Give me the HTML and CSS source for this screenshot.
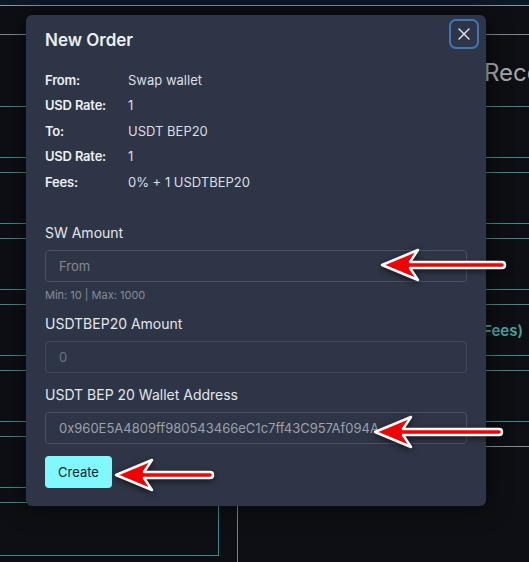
FILE: index.html
```html
<!DOCTYPE html>
<html>
<head>
<meta charset="utf-8">
<link rel="stylesheet" href="styles.css">
</head>
<body>
<div class="page">
  <div class="topbar"></div>
  <div class="header-space"></div>
  <div class="columns">
    <div class="left-col">
      <div class="card"></div>
      <div class="card"></div>
      <div class="card"></div>
      <div class="card"></div>
      <div class="card"></div>
      <div class="card"></div>
      <div class="card card-last"></div>
    </div>
    <div class="right-col">
      <div class="right-head">Recent Orders</div>
      <div class="rcard rcard-first"></div>
      <div class="rcard"></div>
      <div class="rcard"></div>
      <div class="rcard rcard-fees"><span class="fees">(incl. Fees)</span></div>
      <div class="rcard"></div>
      <div class="rfoot"></div>
    </div>
  </div>
</div>

<div class="modal">
  <button class="close-btn" aria-label="Close">
    <svg width="12" height="12" viewBox="0 0 12 12"><path d="M1 1 L11 11 M11 1 L1 11" stroke="#e9ecf0" stroke-width="1.4" fill="none" stroke-linecap="round"/></svg>
  </button>
  <h2 class="title">New Order</h2>
  <div class="info">
    <div class="info-row"><span class="lbl">From:</span><span class="val">Swap wallet</span></div>
    <div class="info-row"><span class="lbl">USD Rate:</span><span class="val">1</span></div>
    <div class="info-row"><span class="lbl">To:</span><span class="val">USDT BEP20</span></div>
    <div class="info-row"><span class="lbl">USD Rate:</span><span class="val">1</span></div>
    <div class="info-row"><span class="lbl">Fees:</span><span class="val">0% + 1 USDTBEP20</span></div>
  </div>
  <div class="form">
    <label class="flabel">SW Amount</label>
    <div class="input"><span class="ph">From</span></div>
    <div class="help">Min: 10 | Max: 1000</div>
    <label class="flabel">USDTBEP20 Amount</label>
    <div class="input disabled"><span class="dis">0</span></div>
    <label class="flabel">USDT BEP 20 Wallet Address</label>
    <div class="input"><span class="addr">0x960E5A4809ff980543466eC1c7ff43C957Af094A</span></div>
    <button class="create">Create</button>
  </div>
</div>

<svg class="arrow arrow-1" width="128" height="34" viewBox="0 0 128 34">
  <path d="M2 17 L38 2 L30 14 L122 14 Q125 14 125 17 Q125 20 122 20 L30 20 L38 32 Z" />
</svg>
<svg class="arrow arrow-2" width="132" height="34" viewBox="0 0 132 34">
  <path d="M2 17 L38 2 L30 14 L126 14 Q129 14 129 17 Q129 20 126 20 L30 20 L38 32 Z" />
</svg>
<svg class="arrow arrow-3" width="102" height="34" viewBox="0 0 102 34">
  <path d="M2 17 L38 2 L30 14 L96 14 Q99 14 99 17 Q99 20 96 20 L30 20 L38 32 Z" />
</svg>
</body>
</html>
```

FILE: styles.css
```css
* { box-sizing: border-box; }
html, body {
  margin: 0;
  padding: 0;
}
body {
  width: 529px;
  height: 562px;
  overflow: hidden;
  background: #0d0f14;
  font-family: Inter, "Noto Sans", sans-serif;
  position: relative;
}
.page {
  width: 529px;
  height: 562px;
  overflow: hidden;
}
.topbar {
  height: 6px;
  background: #0b1a27;
  border-bottom: 1px solid #8b939b;
}
.header-space {
  height: 29px;
  border-bottom: 1px solid #7f8790;
}
.columns {
  display: flex;
}
.left-col {
  flex: 0 0 221px;
  margin-left: -2px;
  padding-top: 71px;
  display: flex;
  flex-direction: column;
  gap: 14px;
}
.card {
  height: 52px;
  border: 1px solid #3c8b89;
}
.card-last {
  height: 54px;
}
.right-col {
  flex: 1 1 0;
  min-width: 0;
  overflow: hidden;
  margin-left: 18px;
  border-left: 1px solid #7a828b;
  min-height: 600px;
  display: flex;
  flex-direction: column;
  gap: 14px;
}
.right-head {
  height: 72px;
  padding-left: 246px;
  padding-top: 24px;
  font-size: 24px;
  line-height: 28px;
  color: #a3a8ae;
  white-space: nowrap;
  overflow: hidden;
  margin-bottom: -14px;
  border-bottom: 1px solid #3c8b89;
}
.rcard {
  height: 52px;
  border-top: 1px solid #3c8b89;
  border-bottom: 1px solid #3c8b89;
}
.rcard-first { border-top: none; height: 51px; }
.rcard-fees {
  display: flex;
  justify-content: flex-end;
  align-items: center;
  padding-right: 6px;
  white-space: nowrap;
}
.fees {
  color: #4aa3a0;
  font-size: 15px;
  font-weight: 600;
}
.rfoot {
  height: 13px;
  border-bottom: 1px solid #858c94;
  margin-top: -2px;
}

/* modal */
.modal {
  position: absolute;
  left: 26px;
  top: 15px;
  width: 460px;
  height: 491px;
  background: #2e3546;
  border-radius: 6px;
  box-shadow: 0 0 24px rgba(0, 0, 0, 0.55);
  padding: 13px 19px 18px 19px;
  color: #e6e9ee;
}
.close-btn {
  position: absolute;
  right: 7px;
  top: 4px;
  width: 30px;
  height: 30px;
  border: 2px solid #3d78b4;
  border-radius: 7px;
  background: transparent;
  display: flex;
  align-items: center;
  justify-content: center;
  padding: 0;
}
.title {
  margin: 0;
  font-size: 17px;
  line-height: 24px;
  font-weight: 600;
  color: #eceef2;
}
.info {
  margin-top: 15px;
}
.info-row {
  display: flex;
  height: 25.5px;
  align-items: center;
  font-size: 13px;
}
.lbl {
  width: 83px;
  font-weight: 600;
  color: #eceef2;
  letter-spacing: -0.2px;
}
.val {
  color: #dcdfe4;
}
.form {
  margin-top: 28px;
  display: flex;
  flex-direction: column;
  align-items: flex-start;
}
.flabel {
  font-size: 14px;
  line-height: 20px;
  color: #e3e6eb;
  margin-bottom: 7px;
}
.input {
  width: 422px;
  height: 32px;
  border: 1px solid #4b5263;
  border-radius: 4px;
  padding-left: 13px;
  display: flex;
  align-items: center;
  font-size: 13px;
  margin-bottom: 12px;
}
.input:has(+ .help) { margin-bottom: 0; }
.ph { color: #838995; }
.dis { color: #6b7280; }
.addr { color: #9ca1ab; }
.input.disabled { border-color: #424958; }
.help {
  font-size: 11px;
  line-height: 14px;
  margin-top: 6px;
  margin-bottom: 12px;
  color: #868c97;
}
.create {
  margin-top: 0;
  height: 32px;
  padding: 0 13px;
  border: none;
  border-radius: 4px;
  background: #80f9fd;
  color: #1b2230;
  font-family: inherit;
  font-size: 13px;
}

/* annotation arrows */
.arrow {
  position: absolute;
  filter: drop-shadow(0 2px 3px rgba(0, 0, 0, 0.6));
}
.arrow path {
  fill: #f20000;
  stroke: #ffffff;
  stroke-width: 2.5;
  stroke-linejoin: round;
}
.arrow-1 { left: 380px; top: 248px; }
.arrow-2 { left: 373px; top: 415px; }
.arrow-3 { left: 114px; top: 458px; }
```
